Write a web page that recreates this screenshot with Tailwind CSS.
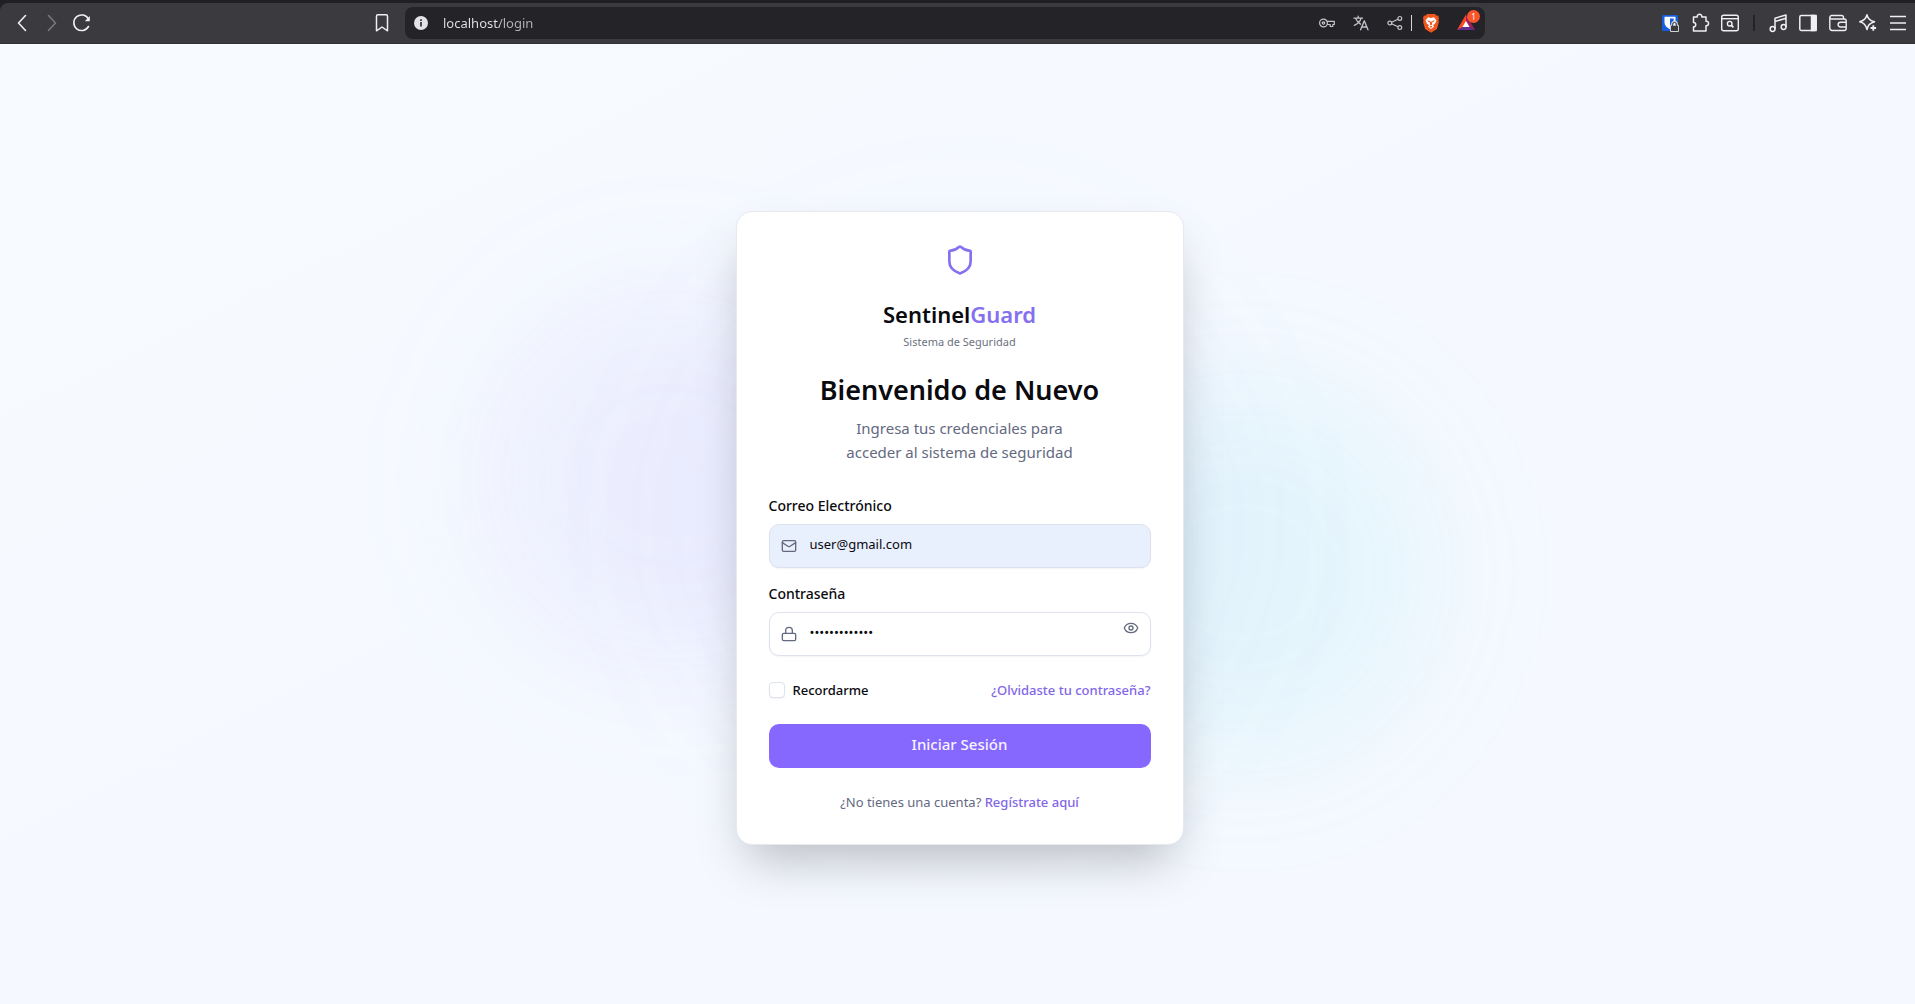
<!DOCTYPE html>
<html lang="es">
<head>
<meta charset="utf-8">
<meta name="viewport" content="width=device-width, initial-scale=1">
<title>SentinelGuard</title>
<script src="https://cdn.jsdelivr.net/npm/@tailwindcss/browser@4"></script>
</head>
<body class="min-h-screen flex flex-col bg-[#f5f9ff] font-['Noto_Sans',sans-serif] text-[#0a0a0f]">

<!-- Browser toolbar -->
<header class="bg-[#1f1f24] pt-[3px]">
  <div class="grid grid-cols-[405px_minmax(0,1fr)_430px] items-center h-[41px] rounded-tl-lg bg-[#3b3b3f] border-b border-[#303034] text-[#f0f0f4]">
    <nav class="flex items-center gap-2 pl-[11px] pr-3">
      <button aria-label="Atrás" class="size-[22px] grid place-items-center"><svg class="size-[22px]" viewBox="0 0 22 22" fill="none" stroke="currentColor" stroke-width="1.6" stroke-linecap="round" stroke-linejoin="round"><path d="M14.5 3.5 7.5 11l7 7.5"/></svg></button>
      <button aria-label="Adelante" class="size-[22px] grid place-items-center text-[#77777c]"><svg class="size-[22px]" viewBox="0 0 22 22" fill="none" stroke="currentColor" stroke-width="1.6" stroke-linecap="round" stroke-linejoin="round"><path d="m7.5 3.5 7 7.5-7 7.5"/></svg></button>
      <button aria-label="Recargar" class="size-[22px] grid place-items-center"><svg class="size-[22px]" viewBox="0 0 22 22" fill="none" stroke="currentColor" stroke-width="1.6" stroke-linecap="round"><path d="M17.5 14.5A7.800 7.800 0 1 1 17.500 7"/><path d="M18.800 4v5.200h-5z" fill="currentColor" stroke="none"/></svg></button>
      <button aria-label="Marcador" class="ml-auto size-[22px] grid place-items-center"><svg class="size-[22px]" viewBox="0 0 22 22" fill="none" stroke="currentColor" stroke-width="1.5" stroke-linejoin="round"><path d="M5.500 4.200c0-.9.5-1.400 1.400-1.400h8.200c.9 0 1.400.5 1.400 1.400v14.600L11 15l-5.500 3.800z"/></svg></button>
    </nav>
    <div class="flex items-center h-8 rounded-lg bg-[#242428] pl-2 pr-[9px]">
      <svg class="size-4 shrink-0" viewBox="0 0 16 16"><circle cx="8" cy="8" r="7" fill="#e4e4e8"/><path d="M7.200 7h1.600v4.500H7.200zM7.200 4.300h1.600v1.600H7.200z" fill="#242428"/></svg>
      <input type="text" aria-label="Dirección" value="localhost/login" class="ml-[14px] flex-1 min-w-0 h-6 text-[13px] text-transparent bg-clip-text bg-[linear-gradient(90deg,#e4e4e8_57px,#b4b4ba_57px)]">
      <div class="flex items-center text-[#c4c4ca]">
        <button aria-label="Contraseñas" class="mr-[18px]"><svg class="block size-4" viewBox="0 0 16 16" fill="none" stroke="currentColor" stroke-width="1.2" stroke-linejoin="round"><circle cx="4.500" cy="8" r="3.900"/><circle cx="4.500" cy="8" r="1.200"/><path d="M8 6.300h7.300v3.200h-1.500v2h-2.600v-2H8"/></svg></button>
        <button aria-label="Traducir" class="mr-[18px]"><svg class="block size-4" viewBox="0 0 16 16" fill="none" stroke="currentColor" stroke-width="1.3" stroke-linecap="round" stroke-linejoin="round"><path d="M1 3.200h8.500M5.200 1.200v2M8 3.400C7.200 6.600 4.500 9 1.300 10.300M2.800 3.600c.9 2.600 2.700 4.200 4.700 5.500M7.600 14.800l3.700-9 3.700 9M8.900 12h4.800"/></svg></button>
        <button aria-label="Compartir" class="mr-2"><svg class="block size-4" viewBox="0 0 16 16" fill="none" stroke="currentColor" stroke-width="1.2"><circle cx="2.800" cy="8" r="1.900"/><circle cx="12.800" cy="3.400" r="1.900"/><circle cx="12.800" cy="12.600" r="1.900"/><path d="m4.600 7.200 6.400-3M4.600 8.800l6.400 3"/></svg></button>
        <span class="w-px h-4 bg-[#d4d4d8] mr-[9px]"></span>
        <button aria-label="Brave Shields" class="mr-[15px]"><svg class="block size-5" viewBox="0 0 20 20"><path d="M6 1h8l1.500 1.700 1.700-.1L18 5.500l-.6 1.700.5 1.800-2 7L10 19.800 4.100 16l-2-7 .5-1.800L2 5.500l.8-2.900 1.700.1z" fill="#f1561d"/><path d="M7 4.300 10 5l3-.7 2.500 3.200-1.500 3.200-2 1.300 1 1.700-3 2.300-3-2.300 1-1.700-2-1.300-1.500-3.200z" fill="#fff"/><path d="m6 7.300 3 .8-.6 1.600zM14 7.300l-3 .8.6 1.600zM9.200 8.500h1.600l.4 3L10 12.300l-1.200-.8zM8.300 13.700l1.700-.9 1.700.9-1.700 1.100z" fill="#f1561d"/></svg></button>
        <button aria-label="Brave Rewards, 1 aviso" class="relative"><svg class="block size-5" viewBox="0 0 20 20"><path d="M10 1.500 1 17l9-4.500z" fill="#ff4724"/><path d="M10 1.500 19 17l-9-5z" fill="#9e1f63"/><path d="M1 17h18l-9-5z" fill="#662d91"/><path d="m10 8-3.600 6h7.200z" fill="#fff"/></svg><span class="absolute -top-[3px] -right-1 size-[13px] rounded-full bg-[#fb542b] text-[8px] leading-[13px] text-center text-white">1</span></button>
      </div>
    </div>
    <nav class="flex items-center justify-end gap-2 pr-[6px]">
      <button aria-label="Bitwarden"><svg class="block size-[22px]" viewBox="0 0 22 22"><rect x="3" y="3" width="16" height="16" rx="1" fill="#175ddc"/><path d="M5.500 4.800h11v6c0 3-2.500 5-5.500 6.500-3-1.500-5.500-3.500-5.500-6.500z" fill="#fff"/><path d="M11 6.500h3.700v4.500c0 1.800-1.500 3-3.700 4.300z" fill="#175ddc"/><path d="M13.300 14v-1.800a2.200 2.200 0 0 1 4.400 0V14" fill="none" stroke="#d0d0d4" stroke-width="2.400"/><path d="M11.500 13.300h8v6.200h-8z" fill="#3b3b3f" stroke="#d0d0d4"/><path d="M13.600 14v-1.700a1.900 1.900 0 0 1 3.800 0V14" fill="none" stroke="#3b3b3f" stroke-width="1"/></svg></button>
      <button aria-label="Extensiones"><svg class="block size-[22px]" viewBox="0 0 22 22" fill="none" stroke="currentColor" stroke-width="1.5" stroke-linejoin="round"><path d="M4.500 5h3.700c-.6-3.700 5.200-3.700 4.600 0H17v4.200c3.400-.4 3.400 5 0 4.500V19H4.500v-4.200c3 .3 3-4.600 0-4.300z"/></svg></button>
      <button aria-label="Buscar pestañas"><svg class="block size-[22px]" viewBox="0 0 22 22" fill="none" stroke="currentColor" stroke-width="1.4"><rect x="2.700" y="3.200" width="16.600" height="15.600" rx="2"/><path d="M3 6.700h16"/><circle cx="10.700" cy="11.700" r="2.300"/><path d="m12.400 13.400 2 2" stroke-width="1.800"/></svg></button>
      <span class="w-[2px] h-4 mx-1 bg-[#242428]"></span>
      <button aria-label="Música"><svg class="block size-[22px]" viewBox="0 0 22 22" fill="none" stroke="currentColor" stroke-width="1.5" stroke-linejoin="round"><path d="M8 17V6.200L19 3v12M8 9.500l11-3.200"/><circle cx="5.600" cy="17" r="2.400"/><circle cx="16.600" cy="15" r="2.400"/></svg></button>
      <button aria-label="Panel lateral"><svg class="block size-[22px]" viewBox="0 0 22 22" fill="none" stroke="currentColor" stroke-width="1.5"><rect x="2.800" y="3.500" width="16.400" height="15" rx="1.500"/><path d="M14.500 3.500h4.500v15h-4.500z" fill="currentColor"/></svg></button>
      <button aria-label="Cartera"><svg class="block size-[22px]" viewBox="0 0 22 22" fill="none" stroke="currentColor" stroke-width="1.4" stroke-linejoin="round"><path d="M16.500 7V5.500a2 2 0 0 0-2-2H5a2 2 0 0 0-2.200 2V16a2.500 2.500 0 0 0 2.400 2.500h12a2 2 0 0 0 2-2V9a2 2 0 0 0-2-2H5C3.600 7 2.800 6.200 2.800 5.300M19 10.200h-5.500a2.400 2.400 0 0 0 0 4.800H19"/></svg></button>
      <button aria-label="Leo"><svg class="block size-[22px]" viewBox="0 0 22 22" fill="none" stroke="currentColor" stroke-width="1.5" stroke-linejoin="round"><path d="M10 2.800c.8 3.900 2.600 5.700 7.500 7-2.300.8-4 1.500-5.300 2.800-1 1.200-1.600 2.600-2.200 4.900-1.200-5-3-6.900-7.300-7.700C7 8.700 8.900 7 10 2.800z"/><path d="M16.300 13.200v5.600M13.500 16h5.600" stroke-width="1.800"/></svg></button>
      <button aria-label="Menú"><svg class="block size-[22px]" viewBox="0 0 22 22" stroke="currentColor" stroke-width="1.6"><path d="M3 4.500h16M3 11h16M3 17.500h16"/></svg></button>
    </nav>
  </div>
</header>

<main class="relative isolate flex-1 grid place-items-center overflow-hidden pl-5 pr-4 pt-2 bg-linear-to-br from-[#f7fbff] via-[#f5f9ff] to-[#f5f9ff]">
  <!-- Soft colour glows behind the card -->
  <div class="absolute -z-10 top-1/4 left-1/4 size-96 rounded-full bg-[#9070f5]/8 blur-3xl"></div>
  <div class="absolute -z-10 bottom-1/4 right-1/4 size-96 rounded-full bg-[#22c8d8]/8 blur-3xl"></div>
  <div class="absolute -z-10 top-1/2 left-1/2 size-[600px] -translate-1/2 rounded-full bg-[#8080ff]/3 blur-3xl"></div>

  <section class="w-full max-w-[448px] rounded-2xl border border-[#e6e9f2] bg-white p-8 shadow-2xl">
    <div class="flex flex-col items-center text-center">
      <svg class="size-8 text-[#8570f0]" viewBox="0 0 24 24" fill="none" stroke="currentColor" stroke-width="2" stroke-linecap="round" stroke-linejoin="round"><path d="M20 13c0 5-3.500 7.500-7.660 8.950a1 1 0 0 1-.67-.01C7.500 20.500 4 18 4 13V6a1 1 0 0 1 1-1c2 0 4.500-1.200 6.240-2.720a1.170 1.170 0 0 1 1.520 0C14.510 3.810 17 5 19 5a1 1 0 0 1 1 1z"/></svg>
      <p class="mt-[22px] text-[22px] leading-8 font-semibold">Sentinel<span class="text-[#8570f0]">Guard</span></p>
      <p class="mt-1 text-[11px] leading-4 text-[#6b7280]">Sistema de Seguridad</p>
      <h1 class="mt-[22px] text-[27px] leading-9 font-semibold">Bienvenido de Nuevo</h1>
      <p class="mt-2 text-[15px] leading-6 text-[#64697f]">Ingresa tus credenciales para<br>acceder al sistema de seguridad</p>
    </div>

    <form class="mt-8 text-[13px] leading-5">
      <label for="email" class="block text-sm font-medium">Correo Electrónico</label>
      <div class="relative mt-2">
        <svg class="absolute left-3 top-[14px] size-4 text-[#64697f]" viewBox="0 0 24 24" fill="none" stroke="currentColor" stroke-width="2" stroke-linecap="round" stroke-linejoin="round"><rect x="2" y="4" width="20" height="16" rx="2"/><path d="m22 7-8.970 5.700a1.940 1.940 0 0 1-2.060 0L2 7"/></svg>
        <input id="email" type="email" value="user@gmail.com" class="block w-full h-11 rounded-[10px] border border-[#dde2ee] bg-[#e8effd] pl-10 pr-3 pb-1 shadow-xs">
      </div>
      <label for="password" class="block mt-4 text-sm font-medium">Contraseña</label>
      <div class="relative mt-2">
        <svg class="absolute left-3 top-[14px] size-4 text-[#64697f]" viewBox="0 0 24 24" fill="none" stroke="currentColor" stroke-width="2" stroke-linecap="round" stroke-linejoin="round"><rect x="2" y="11" width="20" height="11" rx="2"/><path d="M7 11V7a5 5 0 0 1 10 0v4"/></svg>
        <input id="password" type="password" value="contrasena123" class="block w-full h-11 rounded-[10px] border border-[#dde2ee] bg-white pl-10 pr-10 pb-1 shadow-xs">
        <button type="button" aria-label="Mostrar contraseña" class="absolute right-3 top-2 text-[#64697f]"><svg class="block size-4" viewBox="0 0 24 24" fill="none" stroke="currentColor" stroke-width="2" stroke-linecap="round" stroke-linejoin="round"><path d="M2.060 12.350a1 1 0 0 1 0-.7 10.750 10.750 0 0 1 19.880 0 1 1 0 0 1 0 .7 10.750 10.750 0 0 1-19.880 0"/><circle cx="12" cy="12" r="3"/></svg></button>
      </div>
      <div class="mt-6 flex items-center justify-between">
        <label for="remember" class="flex items-center gap-2 font-medium"><input id="remember" type="checkbox" class="appearance-none size-4 rounded-sm border border-[#dde2ee] bg-white shadow-xs">Recordarme</label>
        <a href="#" class="font-medium text-[#8266e8]">¿Olvidaste tu contraseña?</a>
      </div>
      <button type="submit" class="mt-6 block w-full h-11 rounded-[10px] bg-[#8668ff] pb-1 text-[15px] font-medium text-[#f7f4ff]">Iniciar Sesión</button>
      <p class="mt-6 text-center text-[#64697f]">¿No tienes una cuenta? <a href="#" class="font-medium text-[#8266e8]">Regístrate aquí</a></p>
    </form>
  </section>
</main>
</body>
</html>
